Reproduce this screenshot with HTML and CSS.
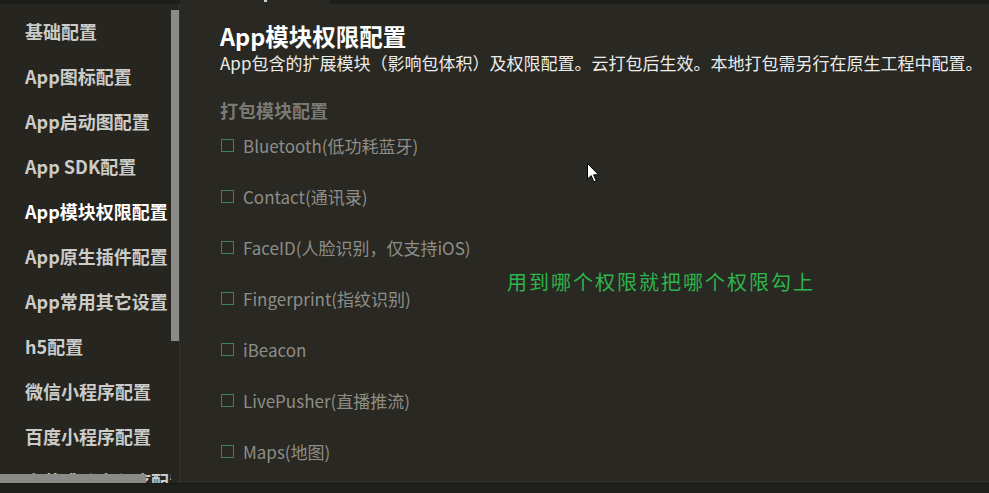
FILE: index.html
```html
<!DOCTYPE html>
<html lang="zh">
<head>
<meta charset="utf-8">
<link rel="stylesheet" href="styles.css">
</head>
<body>
<div class="app">
  <div class="topbar">
    <div class="top-left"></div>
    <div class="top-tab"><span class="tab-mark"></span></div>
    <div class="top-rest"></div>
  </div>
  <div class="body">
    <aside class="sidebar">
      <ul class="nav">
        <li>基础配置</li>
        <li>App图标配置</li>
        <li>App启动图配置</li>
        <li>App SDK配置</li>
        <li class="active">App模块权限配置</li>
        <li>App原生插件配置</li>
        <li>App常用其它设置</li>
        <li>h5配置</li>
        <li>微信小程序配置</li>
        <li>百度小程序配置</li>
        <li>字节跳动小程序配置</li>
      </ul>
      <div class="vtrack"><div class="vthumb"></div></div>
      <div class="hscroll"></div>
    </aside>
    <main class="main">
      <h1 class="title">App模块权限配置</h1>
      <p class="desc">App包含的扩展模块（影响包体积）及权限配置。云打包后生效。本地打包需另行在原生工程中配置。</p>
      <h2 class="section">打包模块配置</h2>
      <ul class="modules">
        <li><span class="box"></span>Bluetooth(低功耗蓝牙)</li>
        <li><span class="box"></span>Contact(通讯录)</li>
        <li><span class="box"></span>FaceID(人脸识别，仅支持iOS)</li>
        <li><span class="box"></span>Fingerprint(指纹识别)</li>
        <li><span class="box"></span>iBeacon</li>
        <li><span class="box"></span>LivePusher(直播推流)</li>
        <li><span class="box"></span>Maps(地图)</li>
      </ul>
      <div class="note">用到哪个权限就把哪个权限勾上</div>
      <svg class="cursor" width="13" height="20" viewBox="0 0 13 20">
        <path d="M0.5 0.5 L0.5 16 L4.2 12.6 L6.8 18.8 L9.2 17.8 L6.6 11.8 L11.6 11.8 Z" fill="#ffffff" stroke="#000000" stroke-width="1"/>
      </svg>
    </main>
  </div>
  <div class="bottombar"></div>
</div>
</body>
</html>
```
FILE: styles.css
```css
* { box-sizing: border-box; }
html, body {
  margin: 0;
  padding: 0;
  width: 989px;
  height: 493px;
  overflow: hidden;
  background: #292822;
  font-family: "Noto Sans CJK SC", "Noto Sans", sans-serif;
}
.app {
  display: flex;
  flex-direction: column;
  width: 989px;
  height: 493px;
}
.topbar {
  display: flex;
  height: 4px;
  flex: none;
}
.top-left { width: 180px; background: #1d1d19; }
.top-tab { width: 149px; background: #292822; position: relative; }
.tab-mark {
  position: absolute;
  left: 84px;
  top: 0;
  width: 3px;
  height: 2px;
  background: #cfcfcf;
}
.top-rest { flex: 1; background: #1d1d19; }

.body {
  display: flex;
  flex: 1;
  min-height: 0;
}
.sidebar {
  position: relative;
  width: 180px;
  flex: none;
  display: flex;
  background: #26251f;
  border-right: 1px solid #34332d;
  overflow: hidden;
}
.nav {
  list-style: none;
  margin: 0;
  padding: 5px 0 0 25px;
  width: 171px;
  white-space: nowrap;
  overflow: hidden;
}
.nav li {
  height: 45px;
  line-height: 45px;
  font-size: 18px;
  font-weight: 700;
  color: #cbcbc8;
}
.nav li.active { color: #ffffff; }
.vtrack {
  width: 8px;
  flex: none;
  padding-top: 6px;
}
.vthumb {
  height: 331px;
  background: #8a8a88;
}
.hscroll {
  position: absolute;
  left: 0;
  bottom: 0;
  width: 146px;
  height: 9px;
  background: #8a8a88;
}

.main {
  position: relative;
  flex: 1;
  padding: 17px 0 0 40px;
  overflow: hidden;
}
.title {
  margin: 0;
  font-size: 23.5px;
  line-height: 30px;
  font-weight: 700;
  color: #ffffff;
}
.desc {
  margin: 1px 0 0;
  font-size: 17px;
  line-height: 22px;
  color: #ececea;
  white-space: nowrap;
}
.section {
  margin: 26px 0 0;
  font-size: 18px;
  line-height: 20px;
  font-weight: 700;
  color: #7a7a75;
}
.modules {
  list-style: none;
  margin: 0;
  padding: 0;
}
.modules li {
  display: flex;
  align-items: center;
  gap: 9px;
  height: 51px;
  font-size: 17px;
  color: #8e8e88;
}
.box {
  width: 13px;
  height: 13px;
  margin-left: 1px;
  border: 1px solid #3f8060;
  flex: none;
}
.note {
  position: absolute;
  left: 327px;
  top: 267px;
  font-size: 20px;
  line-height: 22px;
  letter-spacing: 2px;
  color: #2db54b;
  white-space: nowrap;
}
.cursor {
  position: absolute;
  left: 407px;
  top: 159px;
}
.bottombar {
  height: 10px;
  flex: none;
  background: #1f1f1b;
  border-top: 1px solid #181815;
}
```
